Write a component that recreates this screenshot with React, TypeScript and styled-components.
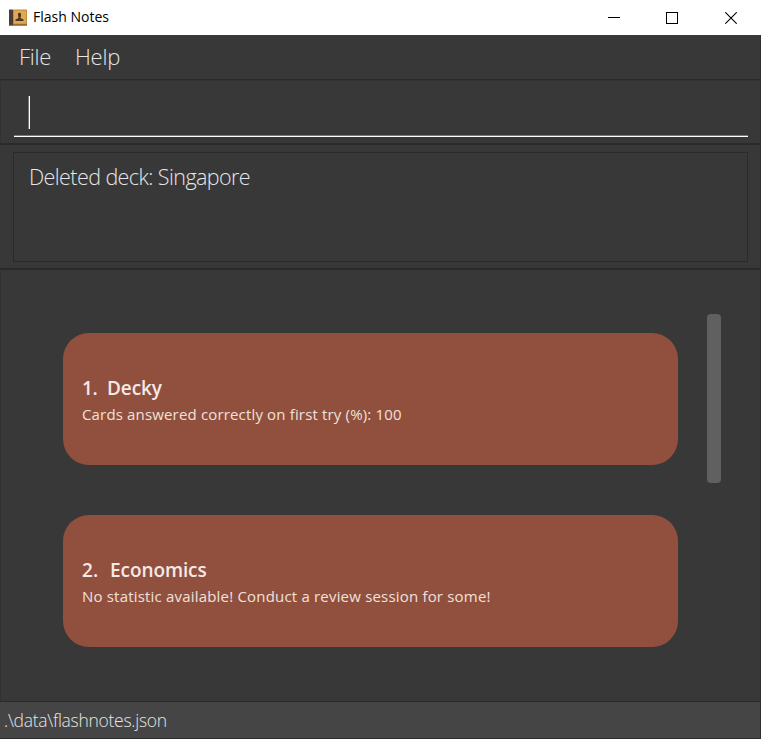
import React from "react";
import styled, { createGlobalStyle } from "styled-components";

const Global = createGlobalStyle`
  * { box-sizing: border-box; }
  html, body { margin: 0; background: #383838; overflow: hidden; }
`;

const Window = styled.div`
  display: flex;
  flex-direction: column;
  width: 761px;
  height: 739px;
  background: #383838;
  border-right: 1px solid #2f2f2f;
  font-family: "Open Sans", "Noto Sans", sans-serif;
`;

const TitleBar = styled.header`
  display: flex;
  align-items: center;
  height: 35px;
  flex: none;
  padding-left: 9px;
  margin-right: -1px;
  background: #fff;
`;

const Text = styled.span<{ $size: number; $weight?: number; $track?: number; $color?: string }>`
  font-size: ${(p) => p.$size}px;
  font-weight: ${(p) => p.$weight ?? 400};
  letter-spacing: ${(p) => p.$track ?? 0}px;
  color: ${(p) => p.$color ?? "#e6e6e6"};
  line-height: 26px;
  white-space: pre;
`;

const AppTitle = styled(Text)`
  margin: -2px auto 0 6px;
`;

const Controls = styled.div`
  display: flex;
  height: 32px;
  width: 176px;
`;

const ControlButton = styled.button`
  display: flex;
  align-items: center;
  justify-content: center;
  width: 58.3px;
  padding: 0;
  border: 0;
  background: none;
`;

const MenuBar = styled.nav`
  display: flex;
  gap: 24px;
  height: 45px;
  flex: none;
  padding: 8px 0 0 19px;
  border-bottom: 1px solid #2a2a2a;
`;

const MenuItem = styled(Text)<{ $width: number }>`
  width: ${(p) => p.$width}px;
`;

const CommandPane = styled.section`
  height: 65px;
  flex: none;
  padding: 15px 12px 0 14px;
  border: 1px solid #323232;
  border-width: 1px 0 0 1px;
  border-bottom: 2px solid #2a2a2a;
`;

const CommandField = styled.div`
  height: 41px;
  padding-left: 14px;
  margin-left: -1px;
  border-bottom: 1px solid #fff;
  box-shadow: inset 0 -1px #777;
`;

const Caret = styled.div`
  width: 2px;
  height: 33px;
  background: #fff;
  border-left: 1px solid #777;
`;

const ResultPane = styled.section`
  height: 125px;
  flex: none;
  padding: 7px 12px 0 13px;
  border-bottom: 2px solid #2a2a2a;
`;

const ResultBox = styled.div`
  height: 110px;
  padding: 11px 15px;
  border: 1px solid #2a2a2a;
`;

const DeckPane = styled.main`
  display: flex;
  height: 431px;
  flex: none;
  padding: 43px 39px 0 62px;
  border-left: 1px solid #323232;
`;

const DeckList = styled.div`
  display: flex;
  flex-direction: column;
  gap: 50px;
  width: 615px;
  padding-top: 20px;
`;

const DeckCard = styled.article`
  display: flex;
  flex-direction: column;
  height: 132px;
  padding: 42px 19px 0;
  border-radius: 26px;
  background: #91503e;
`;

const DeckHeading = styled.div<{ $gap: number }>`
  display: flex;
  gap: ${(p) => p.$gap}px;
`;

const ScrollThumb = styled.div`
  width: 14px;
  height: 169px;
  margin: 0.5px 0 0 28.6px;
  border-radius: 4px;
  background: #606060;
`;

const StatusBar = styled.footer`
  height: 38px;
  flex: none;
  padding: 5px 0 0 4px;
  background: #454545;
  border-top: 1px solid #2a2a2a;
  border-bottom: 1px solid #2b2b2b;
`;

const BookIcon = () => (
  <svg width="18" height="17" viewBox="0 0 18 17">
    <rect x="0" y="0.5" width="4" height="16" rx="0.5" fill="#4b3a38" />
    <rect x="4" y="0.5" width="14" height="16" rx="0.5" fill="#c48a3e" />
    <rect x="5" y="1.5" width="12" height="13" fill="#dea955" />
    <rect x="0" y="15.5" width="18" height="1" fill="#6b4a2c" />
    <path d="M9 4.5Q10.5 3 12 4.5V7L11.4 9L14.5 10.5V12H6.5V10.5L9.6 9L9 7Z" fill="#4c3721" />
  </svg>
);

const decks = [
  { name: "Decky", note: "Cards answered correctly on first try (%): 100", track: 0.16, gap: 9.5, indexTrack: -0.3 },
  { name: "Economics", note: "No statistic available! Conduct a review session for some!", track: 0.19, gap: 12, indexTrack: 0 },
];

export default function App() {
  return (
    <>
      <Global />
      <Window>
        <TitleBar>
          <BookIcon />
          <AppTitle $size={14} $color="#000">Flash Notes</AppTitle>
          <Controls>
            <ControlButton aria-label="Minimize">
              <svg width="12" height="12" shapeRendering="crispEdges"><path d="M0 5.5H12" stroke="#000" /></svg>
            </ControlButton>
            <ControlButton aria-label="Maximize">
              <svg width="12" height="12" shapeRendering="crispEdges"><rect x=".5" y=".5" width="11" height="11" fill="none" stroke="#000" /></svg>
            </ControlButton>
            <ControlButton aria-label="Close">
              <svg width="12" height="12"><path d="M.3.3L11.7 11.7M11.7.3L.3 11.7" stroke="#000" strokeWidth="1.1" /></svg>
            </ControlButton>
          </Controls>
        </TitleBar>
        <MenuBar>
          <MenuItem $size={22} $weight={300} $track={-0.25} $width={32}>File</MenuItem>
          <MenuItem $size={22} $weight={300} $track={-0.25} $width={46}>Help</MenuItem>
        </MenuBar>
        <CommandPane>
          <CommandField><Caret /></CommandField>
        </CommandPane>
        <ResultPane>
          <ResultBox>
            <Text $size={21.5} $weight={300} $track={-0.58}>Deleted deck: Singapore</Text>
          </ResultBox>
        </ResultPane>
        <DeckPane>
          <DeckList>
            {decks.map((deck, i) => (
              <DeckCard key={deck.name}>
                <DeckHeading $gap={deck.gap}>
                  <Text $size={19} $weight={600} $track={deck.indexTrack} $color="#f3e9e6">{i + 1}.</Text>
                  <Text $size={19} $weight={600} $track={-0.1} $color="#f3e9e6">{deck.name}</Text>
                </DeckHeading>
                <Text $size={15} $track={deck.track} $color="#efe1dd">{deck.note}</Text>
              </DeckCard>
            ))}
          </DeckList>
          <ScrollThumb />
        </DeckPane>
        <StatusBar>
          <Text $size={17.5} $weight={300} $track={-0.28}>.\data\flashnotes.json</Text>
        </StatusBar>
      </Window>
    </>
  );
}
